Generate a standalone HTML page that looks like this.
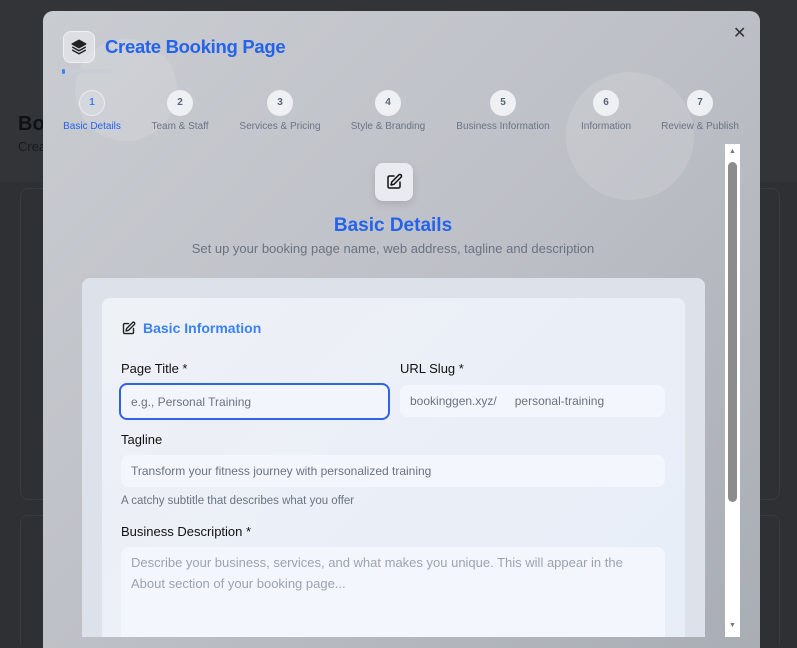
<!DOCTYPE html>
<html><head><meta charset="utf-8"><style>
*{box-sizing:border-box;margin:0;padding:0}
html,body{width:797px;height:648px;overflow:hidden}
body{background:#2f3033;font-family:"Liberation Sans",sans-serif;position:relative}
.bgtop{position:absolute;left:0;top:0;width:797px;height:182px;background:#323437}
.bgtxt{position:absolute;color:#111;font-weight:bold;font-size:20px;left:18px;top:113px}
.bgsub{position:absolute;color:#1a1a1a;font-size:13px;left:18px;top:139px}
.card{position:absolute;left:20px;top:188px;width:760px;height:312px;border:1px solid #3a3b3e;border-radius:8px}
.card2{position:absolute;left:20px;top:515px;width:760px;height:130px;border:1px solid #3a3b3e;border-bottom:none;border-radius:8px 8px 0 0}
.modal{position:absolute;left:43px;top:11px;width:717px;height:637px;border-radius:10px 10px 0 0;background:linear-gradient(135deg,#c9ccd1 0%,#bdc0c6 50%,#a9adb4 100%);overflow:hidden}
.circ{position:absolute;border-radius:50%;background:rgba(255,255,255,0.12)}
.logo{position:absolute;left:20px;top:20px;width:32px;height:32px;border-radius:8px;background:rgba(235,237,242,0.6);border:1px solid rgba(255,255,255,0.5);display:flex;align-items:center;justify-content:center}
.title{position:absolute;left:62px;top:25px;font-size:18.5px;font-weight:bold;color:#2563eb;letter-spacing:-0.3px}
.close{position:absolute;left:690px;top:12px;font-size:16px;color:#333}
.prog{position:absolute;left:19px;top:58px;width:50px;height:5px;border-radius:3px;background:rgba(200,205,212,0.8)}
.prog:before{content:"";position:absolute;left:0;top:0;width:3px;height:5px;background:#3b82f6;border-radius:3px}
.step{position:absolute;top:79px;text-align:center;width:120px;margin-left:-60px}
.step .n{width:26px;height:26px;border-radius:50%;background:#eef0f4;margin:0 auto;font-size:10px;font-weight:bold;color:#5a6376;line-height:26px}
.step .l{font-size:10px;color:#6b7385;margin-top:5px}
.step.a .n{background:rgba(220,224,232,0.5);border:1px solid rgba(255,255,255,0.5);color:#3b82f6;line-height:24px}
.step.a .l{color:#2563eb}
.scroll{position:absolute;left:0;top:133px;width:717px;height:493px;overflow:hidden}
.icon2{position:absolute;left:332px;top:19px;width:38px;height:38px;border-radius:8px;background:#e9ebf0;box-shadow:0 3px 8px rgba(0,0,0,0.12);display:flex;align-items:center;justify-content:center}
.h2{position:absolute;left:0;width:700px;top:71px;text-align:center;font-size:19px;font-weight:bold;color:#2563eb}
.sub{position:absolute;left:0;width:700px;top:97px;text-align:center;font-size:13px;color:#6b7280}
.outer{position:absolute;left:39px;top:134px;width:623px;height:400px;border-radius:8px;background:#dde1e9}
.inner{position:absolute;left:20px;top:20px;width:583px;height:400px;border-radius:8px;background:linear-gradient(135deg,#eef1f6,#e7edf8)}
.sec{position:absolute;left:19px;top:22px;font-size:14px;font-weight:bold;color:#3b82f6;display:flex;align-items:center;gap:7px}
.lab{position:absolute;font-size:13px;color:#111;font-weight:500}
.inp{position:absolute;height:32px;border-radius:8px;background:#f3f6fc;font-size:12px;color:#6b7280;line-height:32px;padding-left:10px}
.help{position:absolute;font-size:11.5px;color:#6b7280}
.sb{position:absolute;left:682px;top:0;width:15px;height:493px;background:#fff}
.sb .th{position:absolute;left:3px;top:18px;width:9px;height:340px;background:#8c8c8c;border-radius:5px}
</style></head><body>
<div class="bgtop"></div>
<div class="bgtxt">Bo</div><div class="bgsub">Crea</div>
<div class="card"></div><div class="card2"></div>
<div class="modal">
 <div class="circ" style="left:32px;top:28px;width:102px;height:102px"></div>
 <div class="circ" style="left:523px;top:61px;width:128px;height:128px"></div>
 <div class="logo"><svg width="18" height="18" viewBox="0 0 24 24" fill="none" stroke="#222" stroke-width="2" stroke-linejoin="round"><path d="M12 3 3 8l9 5 9-5z" fill="#222"/><path d="M3 12l9 5 9-5"/><path d="M3 16l9 5 9-5"/></svg></div>
 <div class="title">Create Booking Page</div>
 <div class="close">✕</div>
 <div class="prog"></div>
 <div class="step a" style="left:49px"><div class="n">1</div><div class="l">Basic Details</div></div>
 <div class="step" style="left:137px"><div class="n">2</div><div class="l">Team &amp; Staff</div></div>
 <div class="step" style="left:237px"><div class="n">3</div><div class="l">Services &amp; Pricing</div></div>
 <div class="step" style="left:345px"><div class="n">4</div><div class="l">Style &amp; Branding</div></div>
 <div class="step" style="left:460px"><div class="n">5</div><div class="l">Business Information</div></div>
 <div class="step" style="left:563px"><div class="n">6</div><div class="l">Information</div></div>
 <div class="step" style="left:657px"><div class="n">7</div><div class="l">Review &amp; Publish</div></div>
 <div class="scroll">
  <div class="icon2"><svg width="18" height="18" viewBox="0 0 24 24" fill="none" stroke="#111" stroke-width="2" stroke-linecap="round" stroke-linejoin="round"><path d="M12 4H6a2 2 0 0 0-2 2v12a2 2 0 0 0 2 2h12a2 2 0 0 0 2-2v-6"/><path d="M18.4 2.6a2 2 0 0 1 3 3L12 15l-4 1 1-4z"/></svg></div>
  <div class="h2">Basic Details</div>
  <div class="sub">Set up your booking page name, web address, tagline and description</div>
  <div class="outer"><div class="inner">
   <div class="sec"><svg width="15" height="15" viewBox="0 0 24 24" fill="none" stroke="#222" stroke-width="2.2" stroke-linecap="round" stroke-linejoin="round"><path d="M12 4H6a2 2 0 0 0-2 2v12a2 2 0 0 0 2 2h12a2 2 0 0 0 2-2v-6"/><path d="M18.4 2.6a2 2 0 0 1 3 3L12 15l-4 1 1-4z"/></svg>Basic Information</div>
   <div class="lab" style="left:19px;top:63px">Page Title *</div>
   <div class="lab" style="left:298px;top:63px">URL Slug *</div>
   <div class="inp" style="left:17px;top:85px;width:271px;height:37px;line-height:35px;border:2px solid #2f64e8;background:#f2f5fb">e.g., Personal Training</div>
   <div class="inp" style="left:298px;top:87px;width:265px"><span>bookinggen.xyz/</span><span style="margin-left:18px">personal-training</span></div>
   <div class="lab" style="left:19px;top:134px">Tagline</div>
   <div class="inp" style="left:19px;top:157px;width:544px">Transform your fitness journey with personalized training</div>
   <div class="help" style="left:19px;top:197px">A catchy subtitle that describes what you offer</div>
   <div class="lab" style="left:19px;top:226px">Business Description *</div>
   <div class="inp" style="left:19px;top:249px;width:544px;height:120px;line-height:21px;padding-top:5px;font-size:13px;color:#9ca3af;padding-right:12px">Describe your business, services, and what makes you unique. This will appear in the About section of your booking page...</div>
  </div></div>
  <div class="sb"><div style="position:absolute;left:4px;top:4px;font-size:7px;color:#777">▲</div><div class="th"></div><div style="position:absolute;left:4px;top:478px;font-size:7px;color:#777">▼</div></div>
 </div>
</div>
</body></html>
